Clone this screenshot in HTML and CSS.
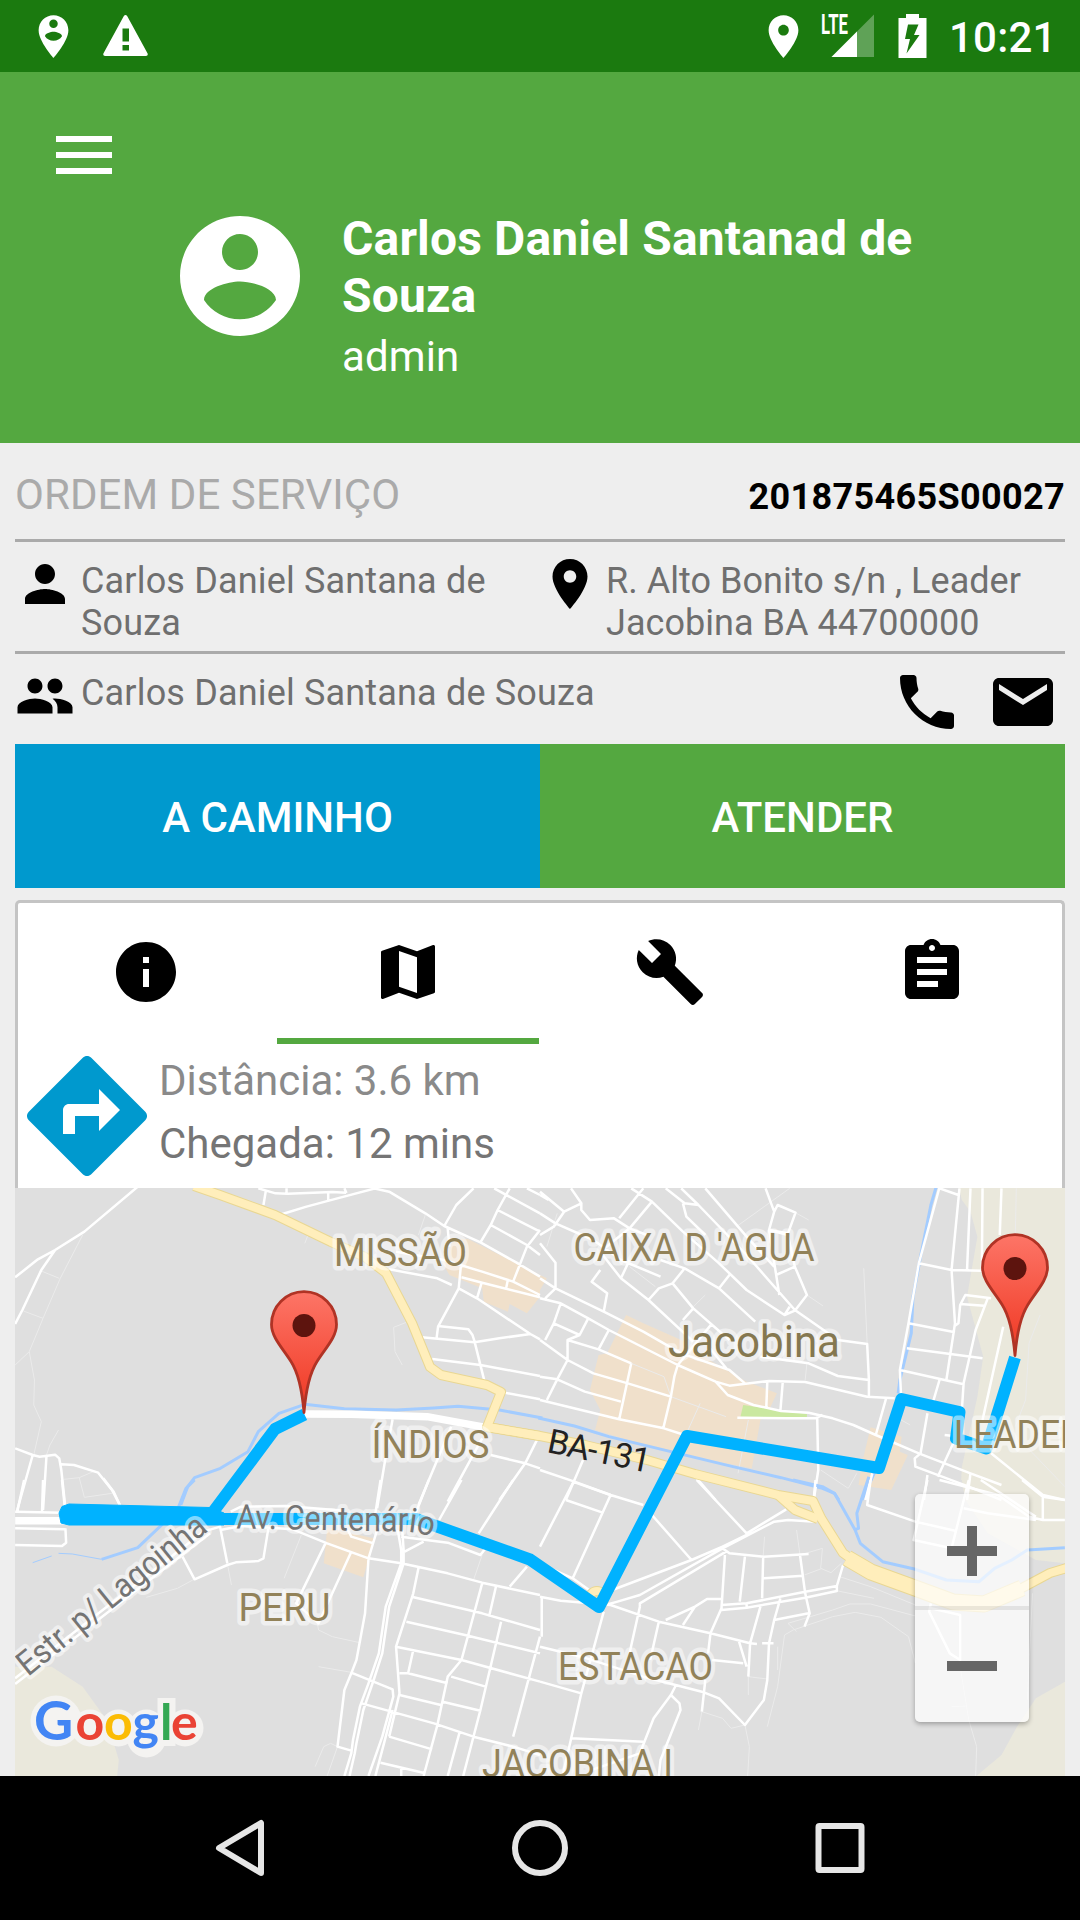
FILE: index.html
```html
<!DOCTYPE html>
<html lang="pt-BR">
<head>
<meta charset="utf-8">
<title>Ordem de Serviço</title>
<link rel="stylesheet" href="styles.css">
</head>
<body>
<div class="status-bar">
  <svg class="status-person" viewBox="0 0 24 24"><path d="M12 2C8.14 2 5 5.14 5 9c0 5.25 7 13 7 13s7-7.75 7-13c0-3.86-3.14-7-7-7zm0 2c1.1 0 2 .9 2 2 0 1.11-.9 2-2 2s-2-.89-2-2c0-1.1.9-2 2-2zm0 10c-1.67 0-3.14-.85-4-2.15.02-1.32 2.67-2.05 4-2.05s3.98.73 4 2.05c-.86 1.3-2.33 2.15-4 2.15z"/></svg>
  <svg class="status-warning" viewBox="0 0 45 41"><path fill-rule="evenodd" d="M20.7 1.2Q22.5-1 24.300 1.200L44.600 38.500Q45.300 41 43 41H2Q-.3 41 .4 38.500ZM19.500 13.500V26.500H26V13.500ZM19.500 30V35.500H26V30Z"/></svg>
  <span class="spacer"></span>
  <svg class="status-place" viewBox="0 0 24 24"><path d="M12 2C8.130 2 5 5.130 5 9c0 5.250 7 13 7 13s7-7.750 7-13c0-3.870-3.130-7-7-7zm0 9.500c-1.380 0-2.500-1.120-2.500-2.500s1.120-2.500 2.500-2.500 2.500 1.120 2.500 2.500-1.120 2.500-2.500 2.500z"/></svg>
  <svg class="status-signal" viewBox="820 6 56 60"><path opacity=".3" d="M831.500 57 874 14.500V57Z"/><path d="M831.500 57 857 31.500V57Z"/><text class="lte" x="821" y="34" textLength="27" lengthAdjust="spacingAndGlyphs">LTE</text></svg>
  <svg class="status-battery" viewBox="0 0 29 44"><path fill-rule="evenodd" d="M8 0H21V4H28.500V44H.5V4H8ZM10 10.500 7 25H12L8.500 39.500 21.500 21H16L20.500 10.500Z"/></svg>
  <span class="clock">10:21</span>
</div>

<header class="header">
  <div class="menu"><i></i><i></i><i></i></div>
  <div class="profile">
    <svg class="avatar" viewBox="2 2 20 20"><path d="M12 2C6.480 2 2 6.480 2 12s4.480 10 10 10 10-4.480 10-10S17.520 2 12 2zm0 3c1.660 0 3 1.340 3 3s-1.340 3-3 3-3-1.340-3-3 1.340-3 3-3zm0 14.200c-2.500 0-4.710-1.280-6-3.220.03-1.990 4-3.080 6-3.080 1.990 0 5.970 1.090 6 3.080-1.290 1.940-3.500 3.220-6 3.220z"/></svg>
    <div>
      <div class="name">Carlos Daniel Santanad de<br>Souza</div>
      <div class="role">admin</div>
    </div>
  </div>
</header>

<main class="content">
  <div class="order-head"><span class="order-title">ORDEM DE SERVIÇO</span><span class="order-number">201875465S00027</span></div>
  <div class="order-row">
    <div class="cell">
      <svg class="icon60" viewBox="0 0 24 24"><path d="M12 12c2.210 0 4-1.790 4-4s-1.790-4-4-4-4 1.790-4 4 1.790 4 4 4zm0 2c-2.670 0-8 1.340-8 4v2h16v-2c0-2.660-5.330-4-8-4z"/></svg>
      <p>Carlos Daniel Santana de<br>Souza</p>
    </div>
    <div class="cell address">
      <svg class="icon60" viewBox="0 0 24 24"><path d="M12 2C8.130 2 5 5.130 5 9c0 5.250 7 13 7 13s7-7.750 7-13c0-3.870-3.130-7-7-7zm0 9.500c-1.380 0-2.500-1.120-2.500-2.500s1.120-2.500 2.500-2.500 2.500 1.120 2.500 2.500-1.120 2.500-2.500 2.500z"/></svg>
      <p>R. Alto Bonito s/n , Leader<br>Jacobina BA 44700000</p>
    </div>
  </div>
  <div class="contact-row">
    <svg class="icon60" viewBox="0 0 24 24"><path d="M16 11c1.660 0 2.990-1.340 2.990-3S17.660 5 16 5c-1.660 0-3 1.340-3 3s1.340 3 3 3zm-8 0c1.660 0 2.990-1.340 2.990-3S9.660 5 8 5C6.340 5 5 6.340 5 8s1.340 3 3 3zm0 2c-2.330 0-7 1.170-7 3.500V19h14v-2.500c0-2.330-4.670-3.500-7-3.500zm8 0c-.29 0-.62.020-.97.050 1.160.84 1.970 1.970 1.970 3.450V19h6v-2.500c0-2.330-4.670-3.500-7-3.500z"/></svg>
    <p>Carlos Daniel Santana de Souza</p>
    <span class="spacer"></span>
    <svg class="icon72" viewBox="0 0 24 24"><path d="M6.620 10.790c1.440 2.830 3.760 5.140 6.590 6.590l2.200-2.200c.27-.27.670-.36 1.020-.24 1.120.37 2.330.57 3.570.57.55 0 1 .45 1 1V20c0 .55-.45 1-1 1-9.390 0-17-7.610-17-17 0-.55.45-1 1-1h3.500c.55 0 1 .45 1 1 0 1.250.2 2.450.57 3.570.11.350.03.740-.25 1.020l-2.200 2.200z"/></svg>
    <svg class="icon72" viewBox="0 0 24 24"><path d="M20 4H4c-1.100 0-1.990.9-1.990 2L2 18c0 1.100.9 2 2 2h16c1.100 0 2-.9 2-2V6c0-1.100-.9-2-2-2zm0 4l-8 5-8-5V6l8 5 8-5v2z"/></svg>
  </div>
  <div class="actions"><div class="btn btn-blue">A CAMINHO</div><div class="btn btn-green">ATENDER</div></div>

  <section class="card">
    <nav class="tabs">
      <div class="tab"><svg class="icon72" viewBox="0 0 24 24"><path d="M12 2C6.480 2 2 6.480 2 12s4.480 10 10 10 10-4.480 10-10S17.520 2 12 2zm1 15h-2v-6h2v6zm0-8h-2V7h2v2z"/></svg></div>
      <div class="tab active"><svg class="icon72" viewBox="0 0 24 24"><path d="M20.500 3l-.16.030L15 5.100 9 3 3.360 4.900c-.21.070-.36.250-.36.480V20.500c0 .28.220.5.5.5l.16-.03L9 18.900l6 2.100 5.640-1.900c.21-.07.360-.25.360-.48V3.500c0-.28-.22-.5-.5-.5zM15 19l-6-2.110V5l6 2.110V19z"/></svg></div>
      <div class="tab"><svg class="icon72" viewBox="0 0 24 24"><path d="M22.700 19l-9.100-9.100c.9-2.300.4-5-1.500-6.900-2-2-5-2.400-7.400-1.300L9 6 6 9 1.600 4.700C.4 7.100.9 10.100 2.900 12.100c1.900 1.900 4.600 2.400 6.900 1.500l9.100 9.100c.4.4 1 .4 1.400 0l2.300-2.300c.5-.4.5-1.100.1-1.400z"/></svg></div>
      <div class="tab"><svg class="icon72" viewBox="0 0 24 24"><path d="M19 3h-4.180C14.400 1.840 13.300 1 12 1c-1.300 0-2.400.84-2.820 2H5c-1.100 0-2 .9-2 2v14c0 1.100.9 2 2 2h14c1.100 0 2-.9 2-2V5c0-1.100-.9-2-2-2zm-7 0c.55 0 1 .45 1 1s-.45 1-1 1-1-.45-1-1 .45-1 1-1zm2 14H7v-2h7v2zm3-4H7v-2h10v2zm0-4H7V7h10v2z"/></svg></div>
    </nav>
    <div class="route-info">
      <svg class="directions" viewBox="0 0 24 24"><path d="M21.710 11.290l-9-9c-.39-.39-1.020-.39-1.410 0l-9 9c-.39.390-.39 1.020 0 1.410l9 9c.39.390 1.020.390 1.410 0l9-9c.39-.38.390-1.010 0-1.410zM14 14.500V12h-4v3H8v-4c0-.55.45-1 1-1h5V7.500l3.500 3.500-3.500 3.500z"/></svg>
      <div><div class="distance">Distância: 3.6 km</div><div class="arrival">Chegada: 12 mins</div></div>
    </div>
  </section>
</main>

<div class="map">
<svg class="map-canvas" viewBox="15 1188 1050 588">
  <defs>
    <linearGradient id="pinFill" x1="0" y1="0" x2="0" y2="1"><stop offset="0" stop-color="#fd7567"/><stop offset=".8" stop-color="#f2432f"/></linearGradient>
    <g id="pin"><path d="M0 0C-2-24-6-40-13-51C-21-64-32.500-75-32.500-88A32.500 32.800 0 0 1 32.500-88C32.500-75 21-64 13-51C6-40 2-24 0 0Z" fill="url(#pinFill)" stroke="#b03325" stroke-width="2.800" stroke-linejoin="round"/><circle cy="-87" r="11.500" fill="#5d140e"/></g>
    <path id="avenue" d="M236 1528.500C300 1529 350 1531 401 1531.500C411 1531.500 423 1534 436 1538"/>
  </defs>

  <!-- terrain -->
  <g transform="translate(540 1180) scale(.34439 .33333)">
    <path class="hill" d="M1215 20H1530V960H1220L1225 860 1270 650 1287 530 1240 350 1270 170 1250 95 1225 60Z"/>
    <path class="shop" d="M0 285 20 295 0 330ZM250 405 300 430 410 480 500 545 600 605 688 640 665 690 640 720 615 865 370 815 160 750 175 690 145 630 170 525 195 520ZM960 742 1050 770 1045 815 1068 825 1020 930 925 915 935 850Z"/>
    <path class="park" d="M590 675 775 702V712L582 710Z"/>
  </g>
  <g transform="translate(0 1180) scale(.34439 .33333)"><path class="shop" d="M1320 175 1360 178 1568 285V350L1530 400 1480 372 1475 395 1405 365 1400 325 1305 285 1285 250Z"/></g>
  <g transform="translate(0 1480) scale(.34439 .33333)">
    <path class="hill" d="M40 560H150L240 620 310 720 345 840 340 890H40Z"/>
    <path class="shop" d="M950 145 1085 175 1070 240 1055 292 940 250Z"/>
  </g>
  <g transform="translate(540 1480) scale(.34439 .33333)">
    <path class="land" d="M1210 0H1228L1235 60 1300 160 1440 240 1530 250V600H1210Z"/>
    <path class="hill" d="M1225 0H1530V250L1440 240 1300 160 1235 60ZM1530 602 1440 655 1385 740 1340 825 1265 890H1530Z"/>
  </g>

  <!-- north-west -->
  <g transform="translate(0 1180) scale(.34439 .33333)">
    <path class="lane" d="M240 165 175 295 125 415 85 515 44 555M120 273 172 295M68 393 125 415M85 515 100 600 98 675 120 725 98 825M170 750 145 795 135 825M185 898 230 893 275 873M230 893 245 952 325 940M1180 427 1143 442 1147 515 1168 555M1235 105 1215 165M900 150 885 190"/>
    <path class="river" d="M1575 714 1450 690 1330 679 1260 684 1150 690 1000 686 885 673 810 700 750 755 720 815 640 865 565 893 545 920 525 975"/>
    <path class="road" d="M400 20 245 155 160 210 110 238 44 292M160 210 120 270 65 390 44 432M44 805 95 825 115 830 160 824 172 835 178 870 190 985M95 825 50 990M135 828 125 990M178 853 215 855 285 878 325 930 348 975M750 25 800 40 835 41 965 36 1005 38M772 32 765 75M832 25V42M953 36V62M1000 25 1006 39M820 102 890 80 955 62 1090 25M1085 25 1130 35 1235 100 1290 138 1395 187 1500 248 1568 290M1375 25 1325 75 1290 138M1480 25 1445 90 1425 135 1395 187M1435 25 1568 100M1445 90 1568 155M1425 135 1530 195 1568 225M1568 150 1530 200 1490 305M1530 25 1568 45M1300 145 1305 200M1150 215 1290 240 1400 275 1490 305 1568 345M1130 268 1270 295 1312 315M1338 260 1332 325 1272 440 1268 472M1332 325 1385 355 1540 462 1568 478M1340 292 1400 308 1568 352M1398 310 1385 355M1475 298 1470 323M1272 438 1360 448 1372 465 1378 485 1407 605M1225 472 1378 487 1450 475 1540 462M1255 537 1395 555 1568 588M1460 637 1568 658M1425 825 1525 850 1568 865M1560 778 1525 850 1450 960M1140 718 1120 830 1095 985M1310 740 1215 975M1400 775 1300 965"/>
    <path class="avenue" d="M883 702 1020 703 1240 710 1410 742"/>
  </g>

  <!-- north-east -->
  <g transform="translate(540 1180) scale(.34439 .33333)">
    <path class="lane" d="M725 25 570 140M745 100 780 120M940 265 950 490M1383 25 1380 170M1452 405 1420 490 1410 660 1380 740M265 550 360 590 380 650 540 710M465 670 430 750M605 720 575 880M815 870 895 925 920 880M1320 700 1524 920M50 100 20 200M260 260 335 320M775 345 822 378M1040 715 1075 735M480 345 445 380M775 550 770 600"/>
    <path class="river" d="M-5 714 100 738 200 770 380 815 560 860 700 893 820 925 855 940 868 960M1150 22 1135 75 1105 230 1083 350 1078 460 1045 600 1040 640M975 870 935 960"/>
    <path class="road" d="M0 45 25 60M0 35 70 95M90 25 120 70 70 95 40 140 0 165M0 100 45 130 155 180 235 240 350 290M0 190 45 248V325L15 355M0 295 45 325 185 395 300 455 410 520 550 570 595 610M0 355 60 370 140 415 200 450 400 555 510 605 550 617 665 603M120 70V90L145 120 215 115 260 145 310 165M300 25 230 115M265 25 325 65 260 145 175 215M325 65 415 155 520 250 600 330 710 405M365 25 420 70 460 75 600 225 740 390M410 25 460 75M415 70 425 110 480 165M480 25 600 170 680 260M655 25 680 95 665 150 695 345M680 95 690 75 742 98 720 160 665 150M740 260 775 345 740 392 710 405 725 380M685 285 740 260 720 165M175 270 150 305 195 340 185 395M175 215 235 295 315 360 445 485M235 295 260 240M420 265 385 310 345 325 315 360M385 310 445 385 550 480M445 385 415 420M350 240 420 265 520 325 625 425M550 285 520 325M740 390 865 480 950 492 955 600V650M640 530 780 550 865 588 955 600M510 605 545 645 620 675 700 693 780 698 850 715 910 735 975 765 1100 820 1250 880 1340 915M665 603 770 606 950 650 1030 655M660 605 657 685M705 605 698 693M573 713 720 715 800 715 820 705M805 715 808 870 795 960M0 480 80 540 155 580 255 610 380 650M0 590 50 598 130 635 235 665M20 660 50 598 80 540V480L115 465 140 415M0 660 230 718 360 745 420 765M265 550 230 718M265 550 170 508 80 480M358 745 380 650 390 590 400 555M200 450 170 508M60 370 40 430 15 480M40 430 115 465M0 870 100 905 205 945M125 840 75 960M455 895 510 960M545 570 490 500M500 430 400 555"/>
    <path class="road" d="M1160 22 1100 250 1070 430 1045 570 1048 640M1160 25 1215 45M1218 25 1195 270 1205 430 1180 600M1250 25 1240 270M1285 25 1283 270M1340 25 1335 165M1100 250 1195 270 1283 272M1070 430 1205 457M1310 355 1235 345 1220 375 1215 430 1205 437M1220 372 1290 377M1300 355 1265 450 1230 610 1225 690M1345 440 1285 720M1065 505 1285 535M1045 570 1230 613M1160 600 1140 670M1005 655 975 765M1125 700 1105 820 1088 835 1090 860 1245 920 1340 960M1230 720 1200 790 1155 890M1175 765 1200 768M1125 885 1115 960M1250 880 1240 960M1310 820 1460 945 1524 960M965 880 945 960M720 165 665 150"/>
  </g>

  <!-- south-west -->
  <g transform="translate(0 1480) scale(.34439 .33333)">
    <path class="river" d="M565 0 540 25 515 90 400 203 295 238"/>
    <path class="stream" d="M295 238 210 222 170 220M95 248 150 228"/>
    <path class="lane" d="M875 165 825 295M660 250 672 315M560 300 515 325 425 352M920 420 925 450 965 470 1045 488M925 560 1020 577M915 860 940 800 960 790 980 800 950 888M1400 225 1375 300"/>
    <path class="road" d="M44 95 180 98M44 145 190 148M44 195 180 198 192 188 190 145M70 0 50 95M125 0 122 95M180 0 188 80M300 -5 330 35 348 75M638 135 660 250M780 140 765 235 750 243 685 247 660 255 565 298 530 230M640 150 700 138 850 148 950 190 1070 235 1165 250 1300 280 1400 308 1568 345M670 95 700 80 830 78 1000 92M945 190 860 370 925 430 1020 215M1070 235 1060 400 1035 540 1020 580 1000 630 980 800 1020 812M1095 150 1070 235M1010 150 1020 170 1085 190M1155 150 1165 210V250L1120 380 1100 520 1070 610 1045 680 1025 780 1020 820 1000 888M1168 150 1172 210V250L1130 380 1110 520 1085 600 1055 690 1035 790 1030 820 1015 888M1020 578 1140 628 1142 650 1110 770 1070 888M1140 690 1115 790 1090 888M1050 670 1260 730 1375 770 1490 800 1568 825M1165 170 1300 188 1395 225 1410 205M1175 215 1230 185M1215 265 1200 340 1150 500 1160 640 1130 770M1195 350 1400 400 1568 450M1180 425 1350 465 1568 520M1150 500 1340 540 1568 605M1400 310 1340 540 1300 590 1270 735 1230 888M1440 320 1420 410M1455 425 1395 690 1345 888M1568 470 1490 770M1200 510 1185 580 1160 580M1185 580 1300 610M1310 590 1410 620M1160 645 1280 675M1285 665 1395 692M1130 770 1255 808M1105 848 1235 880M1335 755 1300 888M1530 260 1480 320M1245 0 1205 105M1340 0 1275 120M1490 0 1390 160M1105 0 1090 100M1165 865V888"/>
    <path class="road" d="M640 140 590 155 44 595M610 160 44 612"/>
    <path class="avenue" d="M44 122H190"/>
  </g>

  <!-- south-east -->
  <g transform="translate(540 1480) scale(.34439 .33333)">
    <path class="lane" d="M745 455 720 430 850 390 900 372 960 372 1090 408M660 740 690 620 710 465 735 450 850 410 915 397 990 412 1070 470 1090 550M1220 560 1245 720 1268 800 1265 888M1195 680 1240 678M470 695 530 715 555 745 595 735 608 800 603 888M460 750 470 695M870 290 960 320 1090 375M865 333 970 355M652 170 648 230M745 150 755 225M820 205 815 265 845 278 875 250M820 205 755 225M820 265 768 285M605 590V645M605 590 660 597M1430 340 1415 660M690 500V570"/>
    <path class="river" d="M735 0 820 20 855 40 915 150 930 190 995 245 1090 268 1180 300 1275 305 1320 265 1370 240 1415 210 1524 203M955 -10 920 100 925 145 912 150"/>
    <path class="road" d="M0 350 60 362 205 375 345 425 495 460 610 490 630 492M5 350 5 470M0 500 120 530 300 590 470 635 520 655 595 735 650 660 660 600 665 490M0 605 120 640M185 395 120 640 85 800 65 888M90 775 300 785M290 380 260 520M345 425 320 540M395 615 380 645 330 715 290 820 150 870M380 645 405 670 408 690 350 840 345 888M0 200 70 60 100 0M75 60 180 97M95 5 205 45 300 75M205 45 95 295M30 265 95 295 170 350M325 105 440 240M455 0 600 160 715 88M210 330 440 240 530 200 600 165M190 375 225 365 290 345 530 205 680 125 720 120 800 125M290 380 290 370 540 215M530 205 550 220 650 230 780 222M537 225 527 385 495 460 488 520M595 230 580 365M648 230 645 355M755 225 770 340 783 400 768 440M650 295 765 287M527 375 600 370 770 335 862 318 880 255M527 390 600 383 770 353 862 333V318M365 420 450 380 485 357H527M640 380 610 490 605 590M698 355 680 420 665 490M680 420 780 400M578 485 600 560M500 540 590 550M480 600 470 695M415 435 450 380M600 368V385M645 490H678M800 0 795 55M960 0 950 75 1090 125 1205 152M1125 0 1085 180 1195 205M1245 0 1195 205M1160 0 1330 45 1420 110 1460 120H1524M1230 85 1300 100 1440 120M1280 0 1440 110M1400 0 1460 50 1524 60M1460 50V120M1135 370 1130 395 1190 520 1220 540V405L1135 385"/>
  </g>

  <!-- highways -->
  <g class="highway-edge">
    <path d="M194 1186 220 1195 275 1215 331 1242 365 1257 386 1273 412 1323 430 1367 441 1375 487 1385 501 1392 487 1427 540 1436"/>
    <path d="M487 1427 540 1436 585 1445 647 1460 695 1474 778 1495 813 1501 821 1518 843 1553 871 1573 915 1588"/>
    <path d="M778 1495 795 1510 818 1519"/>
    <path class="wide" d="M847 1558 871 1572 915 1588 953 1602 984 1604 1022 1588"/>
    <path d="M1010 1593 1022 1588 1050 1573 1070 1567"/>
    <circle cx="597" cy="1598" r="7"/>
    <path d="M597 1603 610 1588"/>
  </g>
  <g class="highway">
    <path d="M194 1186 220 1195 275 1215 331 1242 365 1257 386 1273 412 1323 430 1367 441 1375 487 1385 501 1392 487 1427 540 1436"/>
    <path d="M487 1427 540 1436 585 1445 647 1460 695 1474 778 1495 813 1501 821 1518 843 1553 871 1573 915 1588"/>
    <path d="M778 1495 795 1510 818 1519"/>
    <path class="wide" d="M847 1558 871 1572 915 1588 953 1602 984 1604 1022 1588"/>
    <path d="M1010 1593 1022 1588 1050 1573 1070 1567"/>
    <circle cx="597" cy="1598" r="7"/>
    <path d="M597 1603 610 1588"/>
  </g>

  <!-- route -->
  <g class="route">
    <path d="M304.500 1414.500 275 1429 213 1512M210 1519H416L530 1559.500 599 1607 687 1436 879 1468 901.500 1399 959.500 1412 956 1438.500 986.500 1448.500 1015 1357.500"/>
    <path class="route-wide" d="M59 1513 62 1506.500 69 1504 210 1507.500 224 1513V1525H69L61 1523Z"/>
  </g>

  <!-- labels -->
  <g class="area">
    <text x="334" y="1266" textLength="133" lengthAdjust="spacingAndGlyphs">MISSÃO</text>
    <text x="573.500" y="1260.500" textLength="241" lengthAdjust="spacingAndGlyphs">CAIXA D 'AGUA</text>
    <text class="city" x="668" y="1357" textLength="172" lengthAdjust="spacingAndGlyphs">Jacobina</text>
    <text x="371.500" y="1457.500" textLength="118" lengthAdjust="spacingAndGlyphs">ÍNDIOS</text>
    <text x="954" y="1447.500" textLength="128" lengthAdjust="spacingAndGlyphs">LEADER</text>
    <text x="238.500" y="1620.500" textLength="92" lengthAdjust="spacingAndGlyphs">PERU</text>
    <text x="558" y="1679.500" textLength="155" lengthAdjust="spacingAndGlyphs">ESTACAO</text>
    <text x="482" y="1776.500" textLength="191" lengthAdjust="spacingAndGlyphs">JACOBINA I</text>
  </g>
  <text class="street highway-name" transform="translate(546 1452) rotate(11.500)" textLength="104">BA-131</text>
  <text class="street"><textPath href="#avenue" textLength="197" lengthAdjust="spacingAndGlyphs">Av. Centenário</textPath></text>
  <text class="street" transform="translate(28 1677) rotate(-39)" textLength="233" lengthAdjust="spacingAndGlyphs">Estr. p/ Lagoinha</text>

  <use href="#pin" x="304" y="1412.500"/>
  <use href="#pin" x="1015" y="1355.500"/>

  <g class="google-halo"><circle cx="56" cy="1721" r="25.500"/><circle cx="90" cy="1728" r="18.500"/><circle cx="118.500" cy="1728" r="18.500"/><circle cx="146.500" cy="1728" r="18.500"/><circle cx="146.500" cy="1738" r="19.500"/><rect x="157.500" y="1698" width="18" height="48"/><circle cx="185" cy="1728" r="18.500"/></g>
  <text class="google"><tspan class="g-cap" x="34" y="1740">G</tspan><tspan class="g-red" x="75.500">o</tspan><tspan class="g-yellow" x="104">o</tspan><tspan class="g-blue" x="132.500">g</tspan><tspan class="g-green" x="160">l</tspan><tspan class="g-red" x="171">e</tspan></text>
</svg>
<div class="zoom-control"><div class="zoom-key plus"></div><div class="zoom-key"></div></div>
</div>

<footer class="navbar">
  <svg class="nav-icon" viewBox="0 0 60 60"><path d="M51 5V55L9 30Z"/></svg>
  <svg class="nav-icon" viewBox="0 0 60 60"><circle cx="30" cy="30" r="25"/></svg>
  <svg class="nav-icon" viewBox="0 0 60 60"><rect x="8.500" y="8" width="43" height="44" rx="1"/></svg>
</footer>
</body>
</html>
```

FILE: styles.css
```css
* { box-sizing: border-box; }
body {
  margin: 0;
  width: 1080px;
  height: 1920px;
  display: flex;
  flex-direction: column;
  overflow: hidden;
  background: #eee;
  font-family: Roboto, "Liberation Sans", sans-serif;
}
svg { display: block; flex: none; }
p { margin: 0; }
.spacer { flex: 1; }

.status-bar {
  height: 72px;
  flex: none;
  display: flex;
  align-items: center;
  padding: 0 30px 0 28px;
  background: #1b7a0f;
  color: #fff;
  fill: #fff;
}
.status-person { width: 51px; height: 51px; }
.status-warning { width: 45px; height: 41px; margin: -2px 0 0 24px; }
.status-place { width: 51px; height: 51px; }
.status-signal { width: 56px; height: 60px; margin-left: 11px; }
.lte { font-size: 27px; font-weight: 700; }
.status-battery { width: 29px; height: 44px; margin-left: 22px; }
.clock { font-size: 42px; font-weight: 500; width: 101px; margin-left: 22px; padding-top: 2px; letter-spacing: .2px; }

.header {
  height: 371px;
  flex: none;
  padding-top: 64px;
  background: #54a840;
  color: #fff;
}
.menu { display: flex; flex-direction: column; gap: 10px; width: 56px; margin-left: 56px; }
.menu i { height: 6px; background: #fff; }
.profile { display: flex; gap: 42px; padding: 36px 0 0 180px; }
.avatar { width: 120px; height: 120px; margin-top: 6px; fill: #fff; }
.name { font-size: 48px; line-height: 57px; font-weight: 700; white-space: nowrap; letter-spacing: .15px; }
.role { font-size: 42px; line-height: 49px; margin-top: 8px; letter-spacing: .1px; }

.content { flex: none; padding: 0 15px; }
.order-head {
  height: 99px;
  display: flex;
  align-items: baseline;
  justify-content: space-between;
  padding-top: 27px;
  border-bottom: 3px solid #aaa;
}
.order-title { font-size: 42px; color: #aaa; letter-spacing: .08px; }
.order-number { font-size: 36px; font-weight: 700; color: #000; letter-spacing: .35px; }
.order-row { height: 112px; display: flex; border-bottom: 3px solid #aaa; }
.cell { width: 525px; display: flex; padding-top: 12px; }
.icon60 { width: 60px; height: 60px; }
.icon72 { width: 72px; height: 72px; }
.cell p, .contact-row p { font-size: 36px; line-height: 42px; padding: 6px 0 0 6px; color: #6f6f6f; white-space: nowrap; letter-spacing: .17px; }
.address p { letter-spacing: .03px; }
.contact-row { height: 90px; display: flex; padding-top: 12px; }
.contact-row .icon72 + .icon72 { margin: 0 6px 0 24px; }
.actions { height: 144px; display: flex; }
.btn {
  flex: 1;
  display: flex;
  align-items: center;
  justify-content: center;
  color: #fff;
  font-size: 42px;
  font-weight: 500;
  padding-top: 2px;
}
.btn-blue { background: #0099ce; }
.btn-green { background: #54a840; }

.card {
  margin-top: 12px;
  height: 288px;
  border: 3px solid #c4c4c4;
  border-bottom: 0;
  border-radius: 5px 5px 0 0;
  background: #fff;
}
.tabs { display: flex; height: 141px; margin: 0 -2px 0 -3px; }
.tab { width: 262px; display: flex; justify-content: center; padding-top: 33px; }
.active { border-bottom: 6px solid #54a840; }
.route-info { display: flex; margin-left: -3px; font-size: 42px; }
.directions { width: 144px; height: 144px; fill: #0099ce; }
.distance { line-height: 49px; margin-top: 12px; color: #8a8a8a; }
.arrival { line-height: 49px; margin-top: 14px; color: #757575; }

.map { position: relative; flex: none; width: 1050px; height: 588px; margin-left: 15px; background: #dfdfdf; overflow: hidden; }
.map-canvas { width: 1050px; height: 588px; }
.map-canvas path { vector-effect: non-scaling-stroke; }
.land { fill: #dfdfdf; }
.hill { fill: #eae8dc; }
.shop { fill: #f0e0cb; }
.park { fill: #cae8a0; }
.road, .lane, .river, .stream, .avenue { fill: none; stroke-linejoin: round; }
.road { stroke: #fff; stroke-width: 2.5px; }
.lane { stroke: #ebebeb; stroke-width: 1px; }
.avenue { stroke: #fff; stroke-width: 7.5px; }
.river { stroke: #a3ccff; stroke-width: 3px; }
.stream { stroke: #a3ccff; stroke-width: 1px; }
.highway, .highway-edge { fill: none; stroke-linejoin: round; }
.highway { stroke: #ffeebb; stroke-width: 8px; }
.highway-edge { stroke: #e9d793; stroke-width: 10px; }
.highway .wide { stroke-width: 15px; }
.highway-edge .wide { stroke-width: 17px; }
.route { fill: none; stroke: #00b2ff; stroke-width: 12px; stroke-linejoin: round; }
.route-wide { fill: #00b2ff; stroke-width: 1px; }
.map-canvas text { white-space: pre; }
.area text {
  font-size: 39px;
  fill: #928259;
  stroke: rgba(255, 255, 255, .5);
  stroke-width: 9px;
  stroke-linejoin: round;
  paint-order: stroke;
}
.area .city { font-size: 44.5px; fill: #857850; }
.street {
  font-size: 34px;
  fill: #747474;
  stroke: rgba(255, 255, 255, .5);
  stroke-width: 8px;
  stroke-linejoin: round;
  paint-order: stroke;
}
.highway-name { font-size: 34px; fill: #222; stroke: none; }
.google-halo { fill: #f4f3f1; }
.google { font-family: Lato, sans-serif; font-size: 50px; font-weight: 700; }
.g-cap { font-size: 54px; fill: #4285f4; }
.g-red { fill: #ea4335; }
.g-yellow { fill: #fbbc05; }
.g-blue { fill: #4285f4; }
.g-green { fill: #34a853; }

.zoom-control {
  position: absolute;
  left: 900px;
  top: 306px;
  width: 114px;
  height: 228px;
  border-radius: 5px;
  background: rgba(255, 255, 255, .7);
  box-shadow: 0 2px 5px rgba(0, 0, 0, .3);
}
.zoom-key { height: 112px; display: grid; place-items: center; }
.zoom-key::before, .zoom-key.plus::after { content: ""; grid-area: 1 / 1; width: 50px; height: 10px; background: #666; }
.zoom-key.plus::after { width: 10px; height: 50px; }
.zoom-key.plus { height: 116px; padding-top: 2px; border-bottom: 4px solid rgba(0, 0, 0, .08); }

.navbar { height: 144px; flex: none; display: flex; justify-content: center; align-items: center; gap: 240px; background: #000; }
.nav-icon { width: 60px; height: 60px; fill: none; stroke: #e6e6e6; stroke-width: 6px; stroke-linejoin: round; }
```
